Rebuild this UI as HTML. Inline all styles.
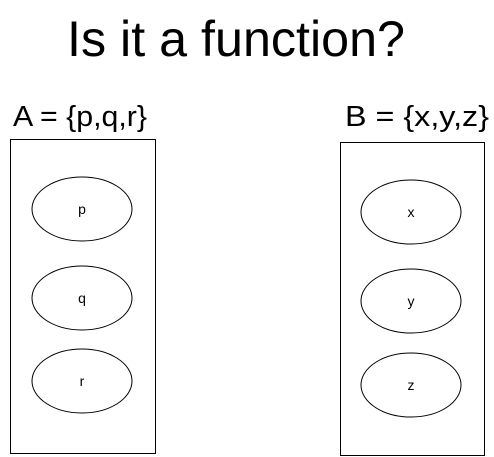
<!DOCTYPE html>
<html><head><meta charset="utf-8"><style>
html,body{margin:0;padding:0;background:#fff;width:494px;height:457px;overflow:hidden}
</style></head><body>
<svg width="494" height="457" xmlns="http://www.w3.org/2000/svg" style="display:block">
<g font-family="Liberation Sans, Arial, sans-serif" fill="#000">
<text x="236" y="56" font-size="50" text-anchor="middle" textLength="338" lengthAdjust="spacingAndGlyphs">Is it a function?</text>
<text x="13" y="126" font-size="29" textLength="134" lengthAdjust="spacingAndGlyphs">A = {p,q,r}</text>
<text x="345" y="126" font-size="29" textLength="144" lengthAdjust="spacingAndGlyphs">B = {x,y,z}</text>
</g>
<g fill="none" stroke="#000" stroke-width="1">
<rect x="10.5" y="139.5" width="145" height="314"/>
<rect x="340.5" y="142.5" width="144" height="313"/>
<ellipse cx="82" cy="209" rx="50" ry="32"/>
<ellipse cx="82" cy="298" rx="50" ry="32"/>
<ellipse cx="82" cy="381" rx="50" ry="32"/>
<ellipse cx="411" cy="212" rx="50" ry="32"/>
<ellipse cx="411" cy="301" rx="50" ry="32"/>
<ellipse cx="411" cy="385" rx="50" ry="32"/>
</g>
<g font-family="Liberation Sans, Arial, sans-serif" font-size="14" text-anchor="middle" fill="#000">
<text x="82" y="214">p</text>
<text x="82" y="303">q</text>
<text x="82" y="386">r</text>
<text x="411" y="217">x</text>
<text x="411" y="306">y</text>
<text x="411" y="390">z</text>
</g>
</svg>
</body></html>
